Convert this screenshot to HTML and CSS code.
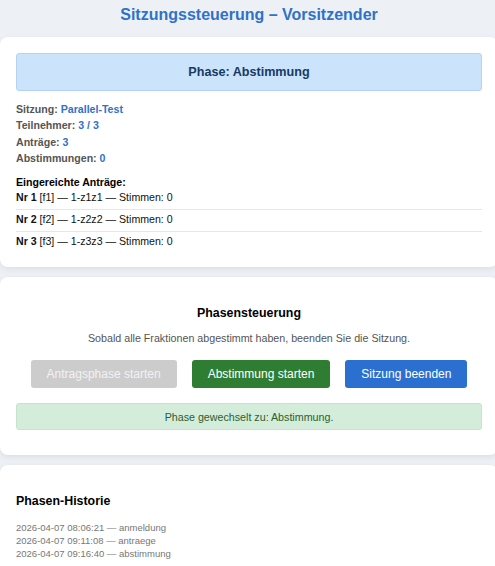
FILE: index.html
```html
<!DOCTYPE html>
<html lang="de">
<head>
<meta charset="utf-8">
<title>Sitzungssteuerung – Vorsitzender</title>
<link rel="stylesheet" href="styles.css">
</head>
<body>
<div class="page">
  <h1 class="title">Sitzungssteuerung – Vorsitzender</h1>

  <section class="card">
    <div class="phase">Phase: Abstimmung</div>
    <div class="info">
      <div class="info-row">Sitzung: <span class="val">Parallel-Test</span></div>
      <div class="info-row">Teilnehmer: <span class="val">3 / 3</span></div>
      <div class="info-row">Anträge: <span class="val">3</span></div>
      <div class="info-row">Abstimmungen: <span class="val">0</span></div>
    </div>
    <div class="list-title">Eingereichte Anträge:</div>
    <ul class="motions">
      <li><b>Nr 1</b> [f1] — 1-z1z1 — Stimmen: 0</li>
      <li><b>Nr 2</b> [f2] — 1-z2z2 — Stimmen: 0</li>
      <li><b>Nr 3</b> [f3] — 1-z3z3 — Stimmen: 0</li>
    </ul>
  </section>

  <section class="card center controls">
    <h3 class="card-title">Phasensteuerung</h3>
    <p class="desc">Sobald alle Fraktionen abgestimmt haben, beenden Sie die Sitzung.</p>
    <div class="buttons">
      <button class="btn btn-disabled" disabled>Antragsphase starten</button>
      <button class="btn btn-green">Abstimmung starten</button>
      <button class="btn btn-blue">Sitzung beenden</button>
    </div>
    <div class="success">Phase gewechselt zu: Abstimmung.</div>
  </section>

  <section class="card">
    <h3 class="card-title">Phasen-Historie</h3>
    <ul class="history">
      <li>2026-04-07 08:06:21 — anmeldung</li>
      <li>2026-04-07 09:11:08 — antraege</li>
      <li>2026-04-07 09:16:40 — abstimmung</li>
    </ul>
  </section>
</div>
</body>
</html>
```

FILE: styles.css
```css
html, body {
  margin: 0;
  padding: 0;
  overflow-x: hidden;
}
body {
  background: #edf1f6;
  font-family: "Liberation Sans", Arial, sans-serif;
  color: #111;
}
.page {
  width: 498px;
  display: flex;
  flex-direction: column;
  gap: 10px;
}
.title {
  margin: 0 0 -4px;
  height: 27px;
  padding-top: 4px;
  box-sizing: content-box;
  text-align: center;
  font-size: 16px;
  line-height: 21px;
  font-weight: bold;
  color: #2f72c9;
}
.card {
  background: #fff;
  border-radius: 8px;
  padding: 16px;
  box-shadow: 0 2px 6px rgba(0, 0, 0, 0.08);
}
.center { text-align: center; }
.controls { padding-bottom: 25px; }
.phase {
  background: #cbe3fb;
  border: 1px solid #b3d3f4;
  border-radius: 3px;
  height: 36px;
  display: flex;
  align-items: center;
  justify-content: center;
  font-weight: bold;
  font-size: 12.6px;
  color: #163a63;
}
.info {
  margin-top: 10px;
  display: flex;
  flex-direction: column;
}
.info-row {
  font-size: 10.6px;
  line-height: 16.3px;
  font-weight: bold;
  color: #555;
}
.val { color: #2f72c9; }
.list-title {
  margin-top: 11px;
  font-size: 10.6px;
  line-height: 11px;
  font-weight: bold;
  color: #000;
}
.motions {
  list-style: none;
  margin: 0;
  padding: 0;
}
.motions li {
  font-size: 10.6px;
  line-height: 13px;
  padding: 3px 0 5px;
  color: #111;
  border-bottom: 1px solid #e6e6e6;
}
.motions li:last-child { border-bottom: none; padding-bottom: 3px; }
.card-title {
  font-size: 12.4px;
  line-height: 15px;
  font-weight: bold;
  margin: 13px 0 0;
  color: #000;
}
.desc {
  margin: 11px 0 0;
  font-size: 10.7px;
  line-height: 13px;
  color: #555;
}
.buttons {
  margin-top: 15px;
  display: flex;
  justify-content: center;
  gap: 15px;
}
.btn {
  font-family: "Liberation Sans", Arial, sans-serif;
  font-size: 12px;
  height: 28px;
  padding: 0 16px;
  border: none;
  border-radius: 3px;
  color: #fff;
  cursor: pointer;
}
.btn-disabled { background: #cccccc; color: #f2f2f2; cursor: default; }
.btn-green { background: #2e7d32; }
.btn-blue { background: #2b70d0; }
.success {
  margin-top: 15px;
  background: #d4edda;
  border: 1px solid #c3e6cb;
  border-radius: 3px;
  height: 25px;
  display: flex;
  align-items: center;
  justify-content: center;
  font-size: 10.7px;
  color: #2b5e32;
}
.history {
  list-style: none;
  margin: 12px 0 0;
  padding: 0;
}
.history li {
  font-size: 9.5px;
  line-height: 13px;
  color: #777;
}
```
